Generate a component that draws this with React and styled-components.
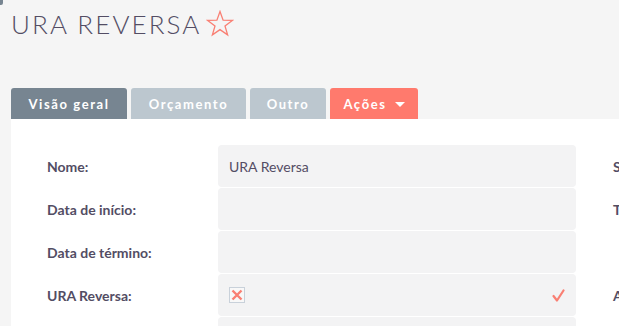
import React from 'react'
import styled, {createGlobalStyle} from 'styled-components'

const Global = createGlobalStyle`
  body {
    margin: 0;
    background: #f5f5f5;
    font-family: Lato, "Open Sans", sans-serif;
    overflow: hidden;
  }
`

const Page = styled.div`
  position: relative;
  padding: 0 0 0 11px;
  width: 619px;
  height: 326px;
  box-sizing: border-box;
  overflow: hidden;
`

const Corner = styled.div`
  position: absolute;
  left: 0;
  top: 0;
  width: 3px;
  height: 5px;
  background: #778591;
  border-bottom-right-radius: 2px;
`

const Title = styled.h1`
  margin: 0;
  padding-top: 8px;
  height: 80px;
  display: flex;
  align-items: flex-start;
  gap: 5px;
  font-weight: 300;
  font-size: 26px;
  letter-spacing: 2.1px;
  color: #534d64;
  line-height: 32px;
`

const Star = styled.svg`
  margin-top: 2px;
  width: 28px;
  height: 27px;
`

const Tabs = styled.div`
  display: flex;
  gap: 4px;
`

const Tab = styled.div`
  height: 31px;
  box-sizing: border-box;
  display: flex;
  align-items: center;
  justify-content: center;
  gap: 8px;
  border-radius: 3px 3px 0 0;
  background: ${p => p.$bg};
  color: #fff;
  font-size: 13px;
  font-weight: 700;
  letter-spacing: 1.6px;
  width: ${p => p.$w}px;
`

const Caret = styled.span`
  width: 0;
  height: 0;
  border-left: 5px solid transparent;
  border-right: 5px solid transparent;
  border-top: 5px solid #fff;
  margin-top: 1px;
`

const Panel = styled.div`
  background: #fff;
  padding: 26px 0 0 36px;
  height: 240px;
`

const Grid = styled.div`
  display: grid;
  grid-template-columns: 171px 358px 37px 40px;
  grid-auto-rows: 42px;
  row-gap: 1.05px;
`

const Label = styled.div`
  display: flex;
  align-items: center;
  font-size: 14px;
  font-weight: 700;
  color: #534d64;
  white-space: nowrap;
`

const Field = styled.div`
  background: #f3f3f4;
  border-radius: 4px;
  display: flex;
  align-items: center;
  justify-content: space-between;
  padding: 0 11px 0 11px;
  font-size: 14px;
  color: #534d64;
`

const Box = styled.span`
  width: 16px;
  height: 16px;
  box-sizing: border-box;
  border: 1px solid #c9d1da;
  background: #f8f8f8;
  display: flex;
  align-items: center;
  justify-content: center;
`

const Spacer = styled.div``

const rows = [
  {label: 'Nome:', value: 'URA Reversa', right: 'S'},
  {label: 'Data de início:', value: '', right: 'T'},
  {label: 'Data de término:', value: '', right: ''},
  {label: 'URA Reversa:', check: true, right: 'A'},
  {label: '', value: '', right: ''},
]

export default function App() {
  return (
    <Page>
      <Global />
      <Corner />
      <Title>
        URA REVERSA
        <Star viewBox="0 0 28 27">
          <path d="M14 1.5 L17.1 10.2 L26.3 10.4 L19 16 L21.6 24.9 L14 19.6 L6.4 24.9 L9 16 L1.7 10.4 L10.9 10.2 Z"
                fill="none" stroke="#f97f73" strokeWidth="1.3" strokeLinejoin="miter" />
        </Star>
      </Title>
      <Tabs>
        <Tab $bg="#778591" $w={116}>Visão geral</Tab>
        <Tab $bg="#bcc7cf" $w={115}>Orçamento</Tab>
        <Tab $bg="#bcc7cf" $w={76}>Outro</Tab>
        <Tab $bg="#ff7a6d" $w={88}>Ações <Caret /></Tab>
      </Tabs>
      <Panel>
        <Grid>
          {rows.map((r, i) => (
            <React.Fragment key={i}>
              <Label>{r.label}</Label>
              <Field>
                {r.check ? (
                  <>
                    <Box>
                      <svg width="12" height="12" viewBox="0 0 12 12">
                        <path d="M1.5 1.5 L10.5 10.5 M10.5 1.5 L1.5 10.5" stroke="#f97f73" strokeWidth="2.4" />
                      </svg>
                    </Box>
                    <svg width="13" height="13" viewBox="0 0 13 13">
                      <path d="M1.5 7 L5 11.5 L11.5 1.5" fill="none" stroke="#f97f73" strokeWidth="2.2" strokeLinejoin="round" strokeLinecap="round" />
                    </svg>
                  </>
                ) : r.value}
              </Field>
              <Spacer />
              <Label>{r.right}</Label>
            </React.Fragment>
          ))}
        </Grid>
      </Panel>
    </Page>
  )
}
